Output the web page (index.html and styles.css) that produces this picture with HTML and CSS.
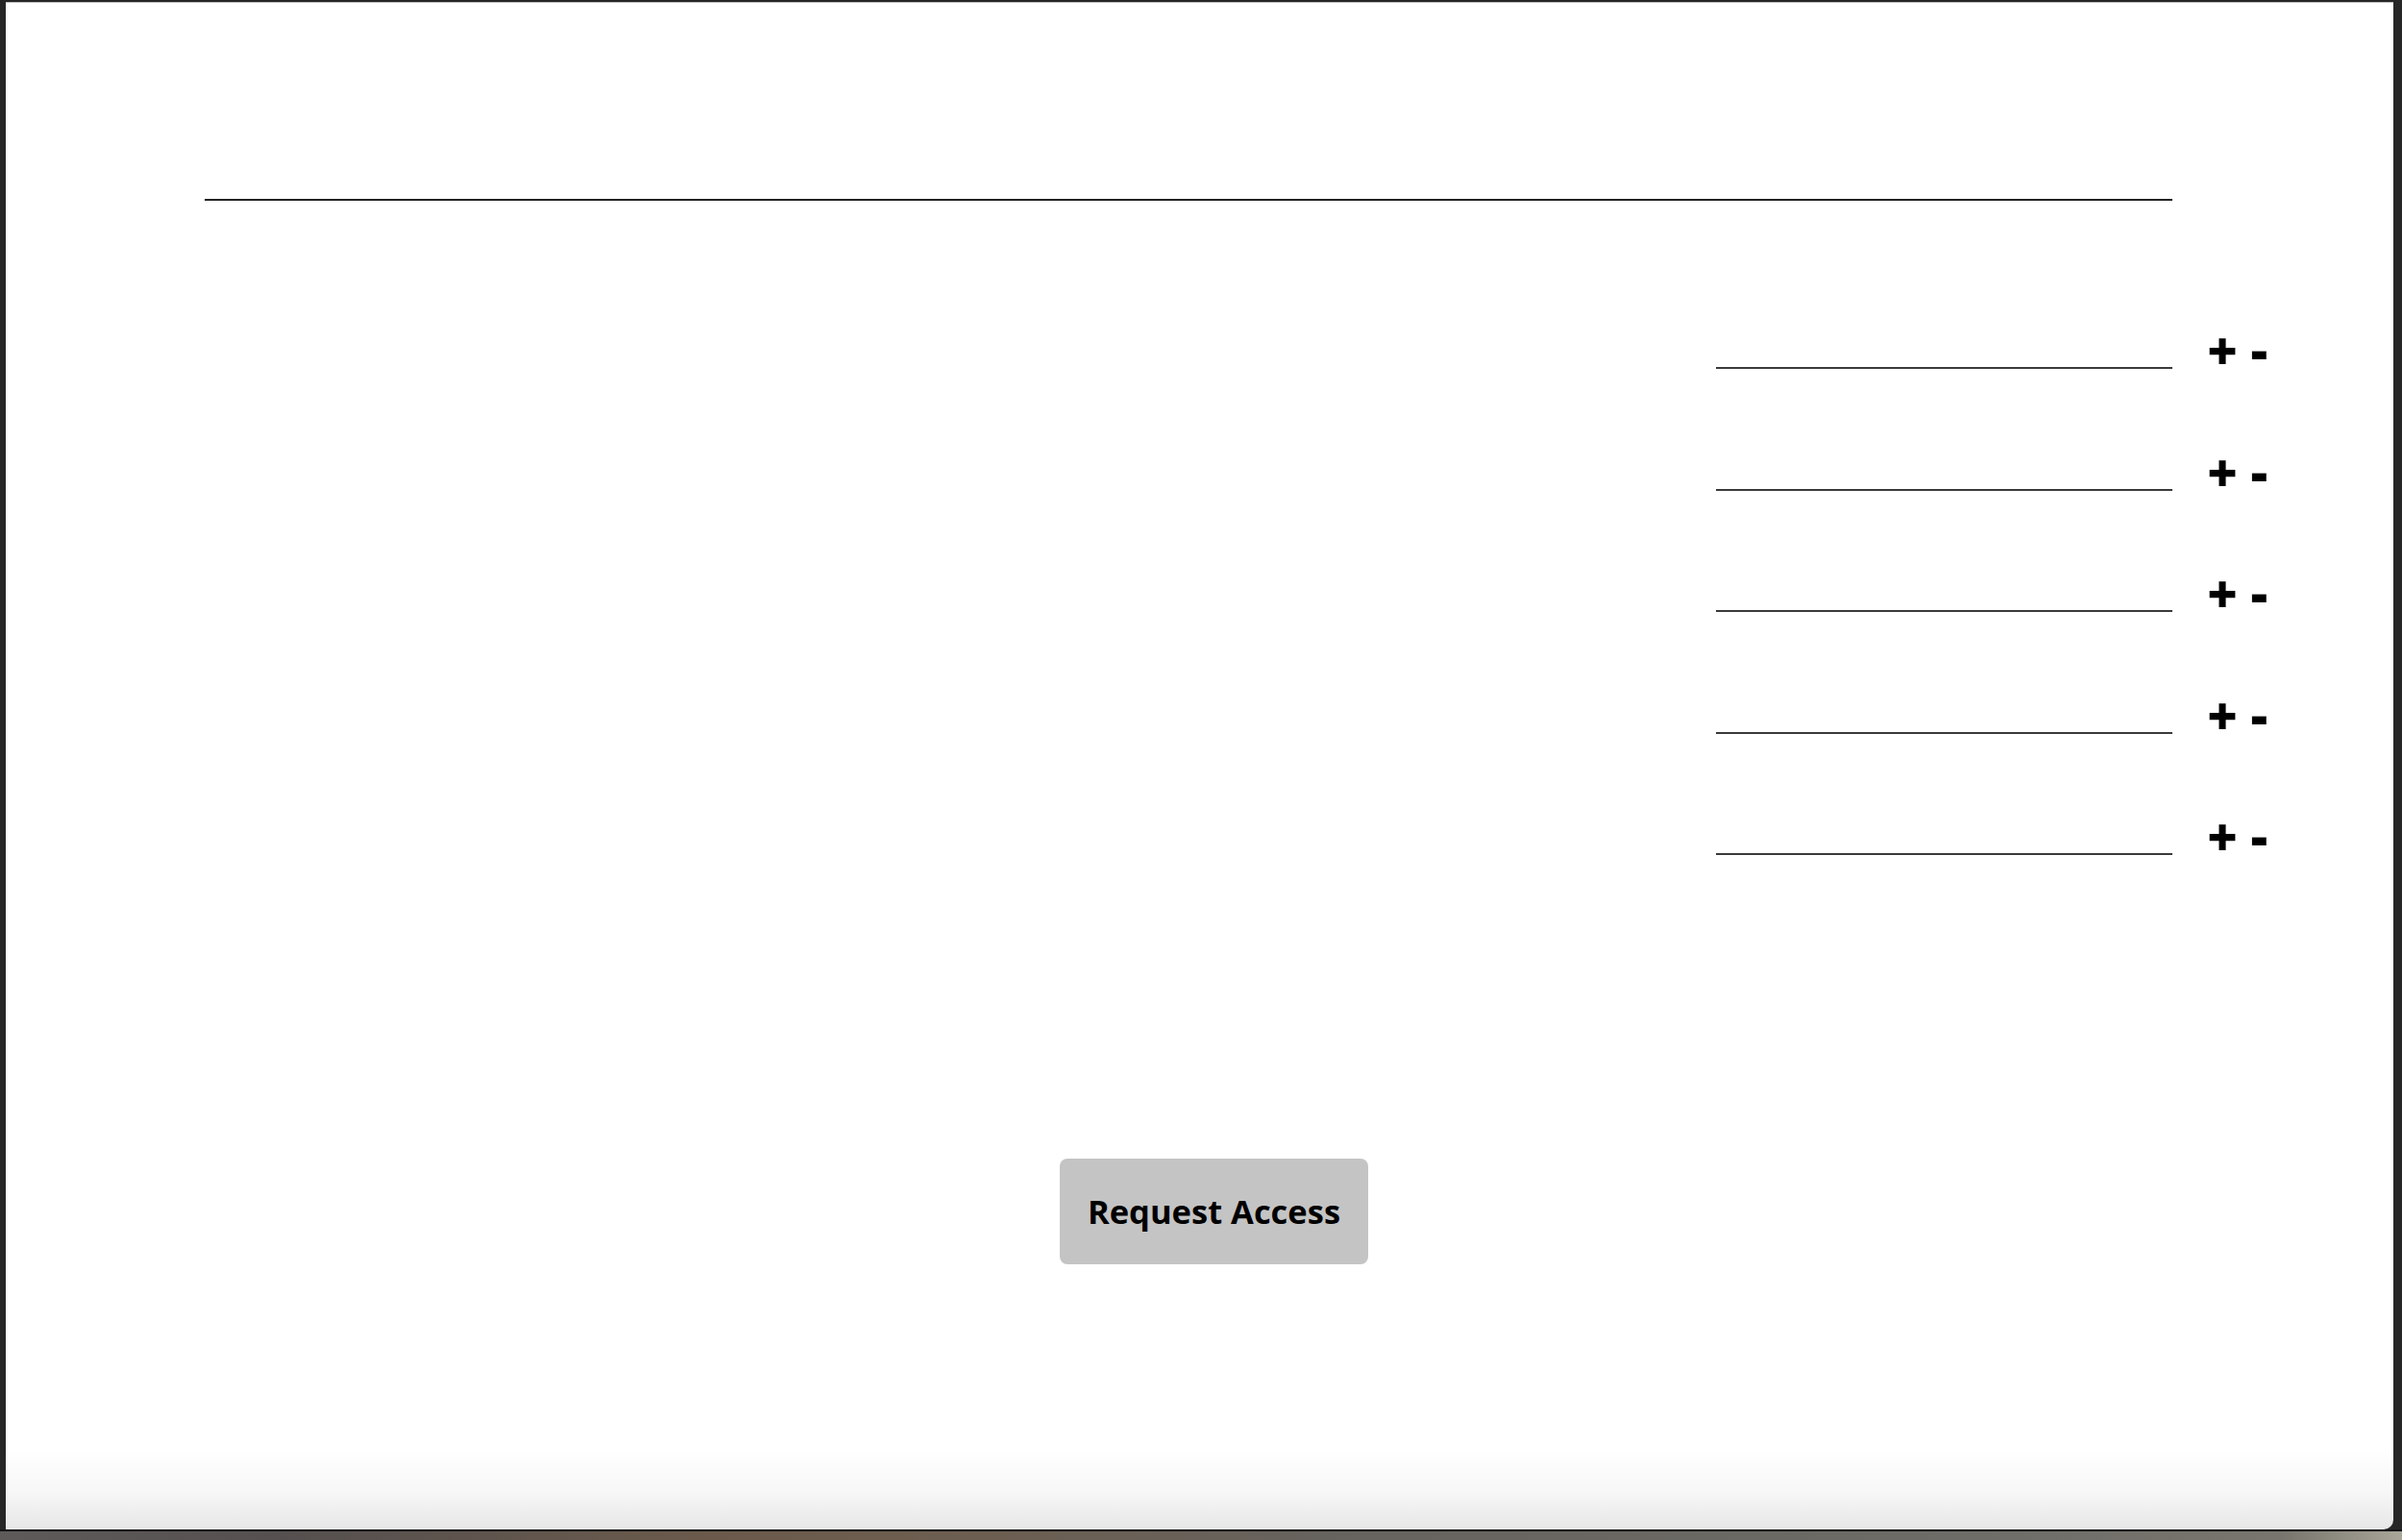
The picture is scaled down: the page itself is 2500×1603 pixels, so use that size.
FILE: index.html
```html
<!DOCTYPE html>
<html lang="en">
<head>
  <meta charset="UTF-8">
  <meta name="viewport" content="width=device-width, initial-scale=1.0">
  <title>Request Access</title>
  <link rel="stylesheet" href="styles.css">
</head>
<body>
  <div class="window">
    <div class="page">
      <hr class="rule">

      <div class="fields">
        <div class="field-row">
          <input class="field">
          <span class="steps"><button class="step">+</button> <button class="step">-</button></span>
        </div>
        <div class="field-row">
          <input class="field">
          <span class="steps"><button class="step">+</button> <button class="step">-</button></span>
        </div>
        <div class="field-row">
          <input class="field">
          <span class="steps"><button class="step">+</button> <button class="step">-</button></span>
        </div>
        <div class="field-row">
          <input class="field">
          <span class="steps"><button class="step">+</button> <button class="step">-</button></span>
        </div>
        <div class="field-row">
          <input class="field">
          <span class="steps"><button class="step">+</button> <button class="step">-</button></span>
        </div>
      </div>

      <div class="actions">
        <button class="request">Request Access</button>
      </div>
    </div>
  </div>
  <div class="desk"></div>
</body>
</html>
```

FILE: styles.css
```css
body {
  margin: 0;
  background-color: #262626;
  font-family: "Open Sans", Arial, sans-serif;
  color: #000;
  overflow: hidden;
}
.window {
  margin: 2px 9px 0 6px;
  height: 1590px;
  box-sizing: border-box;
  border-top: 1px solid #bdbdbd;
  border-bottom-right-radius: 10px;
  background: linear-gradient(to bottom, #fff 0, #fff 1505px, #f7f7f7 1550px, #e6e6e6 100%);
}
.page {
  padding: 204px 230px 0 207px;
}
.rule {
  margin: 0;
  border: none;
  height: 2px;
  background-color: #222;
}
.fields {
  margin-top: 115px;
  display: flex;
  flex-direction: column;
  gap: 66.5px;
}
.field-row {
  display: flex;
  justify-content: flex-end;
  align-items: flex-end;
  margin-right: -99px;
}
.field {
  width: 475px;
  height: 60px;
  box-sizing: border-box;
  padding: 0;
  border: none;
  border-bottom: 2px solid #3a3a3a;
  outline: none;
  background: transparent;
  font-family: inherit;
  font-size: 24px;
}
.steps {
  margin-left: 36px;
  margin-bottom: -7px;
  font-size: 54px;
  font-weight: 800;
  line-height: 54px;
  white-space: nowrap;
}
.step {
  padding: 0;
  border: none;
  background: none;
  color: #000;
  font: inherit;
  cursor: pointer;
}
.actions {
  margin-top: 316px;
  padding-left: 53px;
  display: flex;
  justify-content: center;
}
.request {
  padding: 30px 29px;
  border: none;
  border-radius: 8px;
  background-color: #c4c4c4;
  color: #000;
  font-family: inherit;
  font-size: 34.5px;
  font-weight: 700;
  line-height: 50px;
  cursor: pointer;
}
.desk {
  height: 11px;
  box-sizing: border-box;
  border-top: 2px solid #151515;
  background: linear-gradient(to right, #5e5a5a 0%, #55504f 12%, #6b5a4b 30%, #6c5e50 40%, #66625d 55%, #6c6b66 80%, #77756d 95%, #a9a598 100%);
}
```
